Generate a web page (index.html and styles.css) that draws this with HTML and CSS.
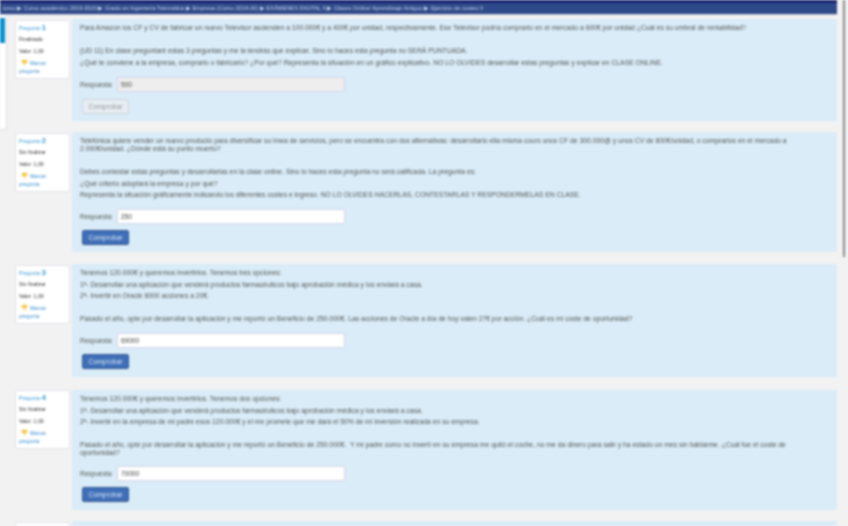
FILE: index.html
```html
<!DOCTYPE html>
<html lang="es">
<head>
<meta charset="utf-8">
<title>Ejercicio de costes II</title>
<link rel="stylesheet" href="styles.css">
</head>
<body>
<div class="page">
  <div class="main">
    <header class="topbar">
      <nav class="crumbs">tomo ▶ Curso académico 2019-2020 ▶ Grado en Ingeniería Telemática ▶ Empresa (Curso 2019-20) ▶ EXÁMENES DIGITAL II ▶ Clases Online/ Aprendizaje Antiguo ▶ Ejercicio de costes II</nav>
    </header>
    <div class="body">
      <aside class="side"><div class="tab"></div></aside>
      <div class="questions">
        <section class="que q1">
          <div class="info">
            <h3 class="qno">Pregunta <b>1</b></h3>
            <div class="state">Finalizado</div>
            <div class="grade">Valor: 1,00</div>
            <div class="flag"><svg class="flagicon" viewBox="0 0 10 10"><path d="M1 1h8v4L5.500 7v3h-1V7L1 5z" fill="#f5c84a"/></svg><a>Marcar<br>pregunta</a></div>
          </div>
          <div class="content">
            <p>Para Amazon los CF y CV de fabricar un nuevo Televisor ascienden a 100.000€ y a 400€ por unidad, respectivamente. Ese Televisor podría comprarlo en el mercado a 600€ por unidad ¿Cuál es su umbral de rentabilidad?</p>
            <p>&nbsp;</p>
            <p>(UD 11) En clase preguntaré estas 3 preguntas y me la tendrás que explicar. Sino lo haces esta pregunta no SERÁ PUNTUADA.</p>
            <p>¿Qué te conviene a la empresa, comprarlo o fabricarlo? ¿Por qué? Representa la situación en un gráfico explicativo. NO LO OLVIDES desarrollar estas preguntas y explicar en CLASE ONLINE.</p>
            <div class="answer"><label>Respuesta:</label><input class="field off" value="500" disabled></div>
            <button class="check off" disabled>Comprobar</button>
          </div>
        </section>

        <section class="que q2">
          <div class="info">
            <h3 class="qno">Pregunta <b>2</b></h3>
            <div class="state">Sin finalizar</div>
            <div class="grade">Valor: 1,00</div>
            <div class="flag"><svg class="flagicon" viewBox="0 0 10 10"><path d="M1 1h8v4L5.500 7v3h-1V7L1 5z" fill="#f5c84a"/></svg><a>Marcar<br>pregunta</a></div>
          </div>
          <div class="content">
            <p>Telefónica quiere vender un nuevo producto para diversificar su línea de servicios, pero se encuentra con dos alternativas: desarrollarlo ella misma cours unos CF de 300.000@ y unos CV de 800€/unidad, o comprarlos en el mercado a 2.000€/unidad. ¿Dónde está su punto muerto?</p>
            <p>&nbsp;</p>
            <p>Debes contestar estas preguntas y desarrollarlas en la clase online. Sino lo haces esta pregunta no será calificada. La pregunta es:</p>
            <p>¿Qué criterio adoptará la empresa y por qué?</p>
            <p>Representa la situación gráficamente indicando los diferentes costes e ingreso. NO LO OLVIDES HACERLAS, CONTESTARLAS Y RESPONDERMELAS EN CLASE.</p>
            <div class="answer"><label>Respuesta:</label><input class="field" value="250"></div>
            <button class="check">Comprobar</button>
          </div>
        </section>

        <section class="que q3">
          <div class="info">
            <h3 class="qno">Pregunta <b>3</b></h3>
            <div class="state">Sin finalizar</div>
            <div class="grade">Valor: 1,00</div>
            <div class="flag"><svg class="flagicon" viewBox="0 0 10 10"><path d="M1 1h8v4L5.500 7v3h-1V7L1 5z" fill="#f5c84a"/></svg><a>Marcar<br>pregunta</a></div>
          </div>
          <div class="content">
            <p>Tenemos 120.000€ y queremos invertirlos. Tenemos tres opciones:</p>
            <p>1ª- Desarrollar una aplicación que venderá productos farmacéuticos bajo aprobación médica y los enviará a casa.</p>
            <p>2ª- Invertir en Oracle 6000 acciones a 20€.</p>
            <p>&nbsp;</p>
            <p>Pasado el año, opte por desarrollar la aplicación y me reportó un Beneficio de 250.000€. Las acciones de Oracle a día de hoy valen 27€ por acción. ¿Cuál es mi coste de oportunidad?</p>
            <div class="answer"><label>Respuesta:</label><input class="field" value="69000"></div>
            <button class="check">Comprobar</button>
          </div>
        </section>

        <section class="que q4">
          <div class="info">
            <h3 class="qno">Pregunta <b>4</b></h3>
            <div class="state">Sin finalizar</div>
            <div class="grade">Valor: 1,00</div>
            <div class="flag"><svg class="flagicon" viewBox="0 0 10 10"><path d="M1 1h8v4L5.500 7v3h-1V7L1 5z" fill="#f5c84a"/></svg><a>Marcar<br>pregunta</a></div>
          </div>
          <div class="content">
            <p>Tenemos 120.000€ y queremos invertirlos. Tenemos dos opciones:</p>
            <p>1ª- Desarrollar una aplicación que venderá productos farmacéuticos bajo aprobación médica y los enviará a casa.</p>
            <p>2ª- Invertir en la empresa de mi padre esos 120.000€ y el me promete que me dará el 50% de mi inversión realizada en su empresa.</p>
            <p>&nbsp;</p>
            <p>Pasado el año, opte por desarrollar la aplicación y me reportó un Beneficio de 250.000€.&nbsp; Y mi padre como no invertí en su empresa me quitó el coche, no me da dinero para salir y ha estado un mes sin hablarme. ¿Cuál fue el coste de oportunidad?</p>
            <div class="answer"><label>Respuesta:</label><input class="field" value="70000"></div>
            <button class="check">Comprobar</button>
          </div>
        </section>

        <section class="que q5">
          <div class="info"></div>
          <div class="content"></div>
        </section>
      </div>
    </div>
  </div>
  <div class="scrollbar"><div class="thumb"></div></div>
</div>
</body>
</html>
```

FILE: styles.css
```css
* { box-sizing: border-box; }
html, body { margin: 0; height: 100%; overflow: hidden; background: #f2f2f2; }
body { font-family: "Liberation Sans", Arial, sans-serif; color: #333; }
.page { display: flex; width: 848px; height: 526px; overflow: hidden; filter: blur(0.9px); background: #f2f2f2; }
.main { width: 837px; flex: none; }
.topbar { height: 15px; background: #2f4a8a; border-top: 3px solid #17206f; border-bottom: 1px solid #c4c8d4; }
.crumbs { font-size: 5.7px; line-height: 11px; color: #c9d4ea; white-space: nowrap; overflow: hidden; padding-left: 3px; }
.body { display: flex; }
.side { width: 7px; height: 115px; background: #fff; border: 1px solid #ddd; border-width: 0 1px 1px 0; padding-top: 3px; flex: none; }
.tab { width: 5px; height: 25px; background: #0a8fd0; }
.questions { margin-left: 8px; width: 822px; padding-top: 4px; }
.que { display: flex; gap: 2px; align-items: flex-start; }
.q1 { height: 113px; }
.q2 { height: 132px; }
.q3 { height: 126px; }
.q4 { height: 131px; }
.info { width: 55px; height: 59px; margin-top: 1px; padding: 3px 3px 0; background: #fff; border: 1px solid #e3e3ea; border-radius: 2px; flex: none; font-size: 5.2px; color: #333; }
.q4 .info { margin-top: 0; }
.qno { margin: 0; font-size: 5.2px; font-weight: normal; color: #3a9bd5; line-height: 8px; }
.qno b { font-size: 8px; font-weight: bold; }
.state { line-height: 8px; margin-top: 3px; }
.grade { line-height: 8px; margin-top: 4px; }
.flag { position: relative; line-height: 8px; margin-top: 4px; color: #3a8fd0; text-indent: 11px; }
.flag a { display: block; }
.flag a::first-line { text-indent: 11px; }
.flagicon { position: absolute; left: 2px; top: 0; width: 7px; height: 7px; }
.content { flex: 1; padding: 5px 8px 6px; background: #d9ecf7; border-radius: 1px; font-size: 6.8px; color: #555; }
.q1 .content { height: 102px; }
.q2 .content { height: 120px; }
.q3 .content { height: 113px; }
.q4 .content { height: 120px; }
.q5 .content { height: 20px; }
.q5 .info { height: 20px; }
.content p { margin: 0 0 3.6px; line-height: 8px; padding-right: 40px; }
.answer { display: flex; align-items: center; margin-top: 10px; gap: 2px; }
.q4 .answer { margin-top: 9px; }
.answer label { font-size: 6.5px; color: #555; width: 35px; }
.field { width: 228px; height: 15px; padding: 0 3px; font: 6.5px "Liberation Sans", Arial, sans-serif; color: #444; background: #fff; border: 1px solid #d6d6e6; border-radius: 1px; }
.field.off { background: #eeeeee; }
.check { display: block; width: 47px; height: 15px; margin: 6px 0 0 2px; padding: 0; font: 6.8px "Liberation Sans", Arial, sans-serif; color: #d6e4f5; background: #3f6fb8; border: 1px solid #35558f; border-radius: 2px; }
.check.off { margin-top: 7px; color: #999; background: #e6edf3; border-color: #d2d4de; }
.scrollbar { flex: 1; position: relative; background: #f2f2f2; }
.thumb { position: absolute; left: 6px; top: 0; width: 2px; height: 257px; background: #8a8a8a; }
```
